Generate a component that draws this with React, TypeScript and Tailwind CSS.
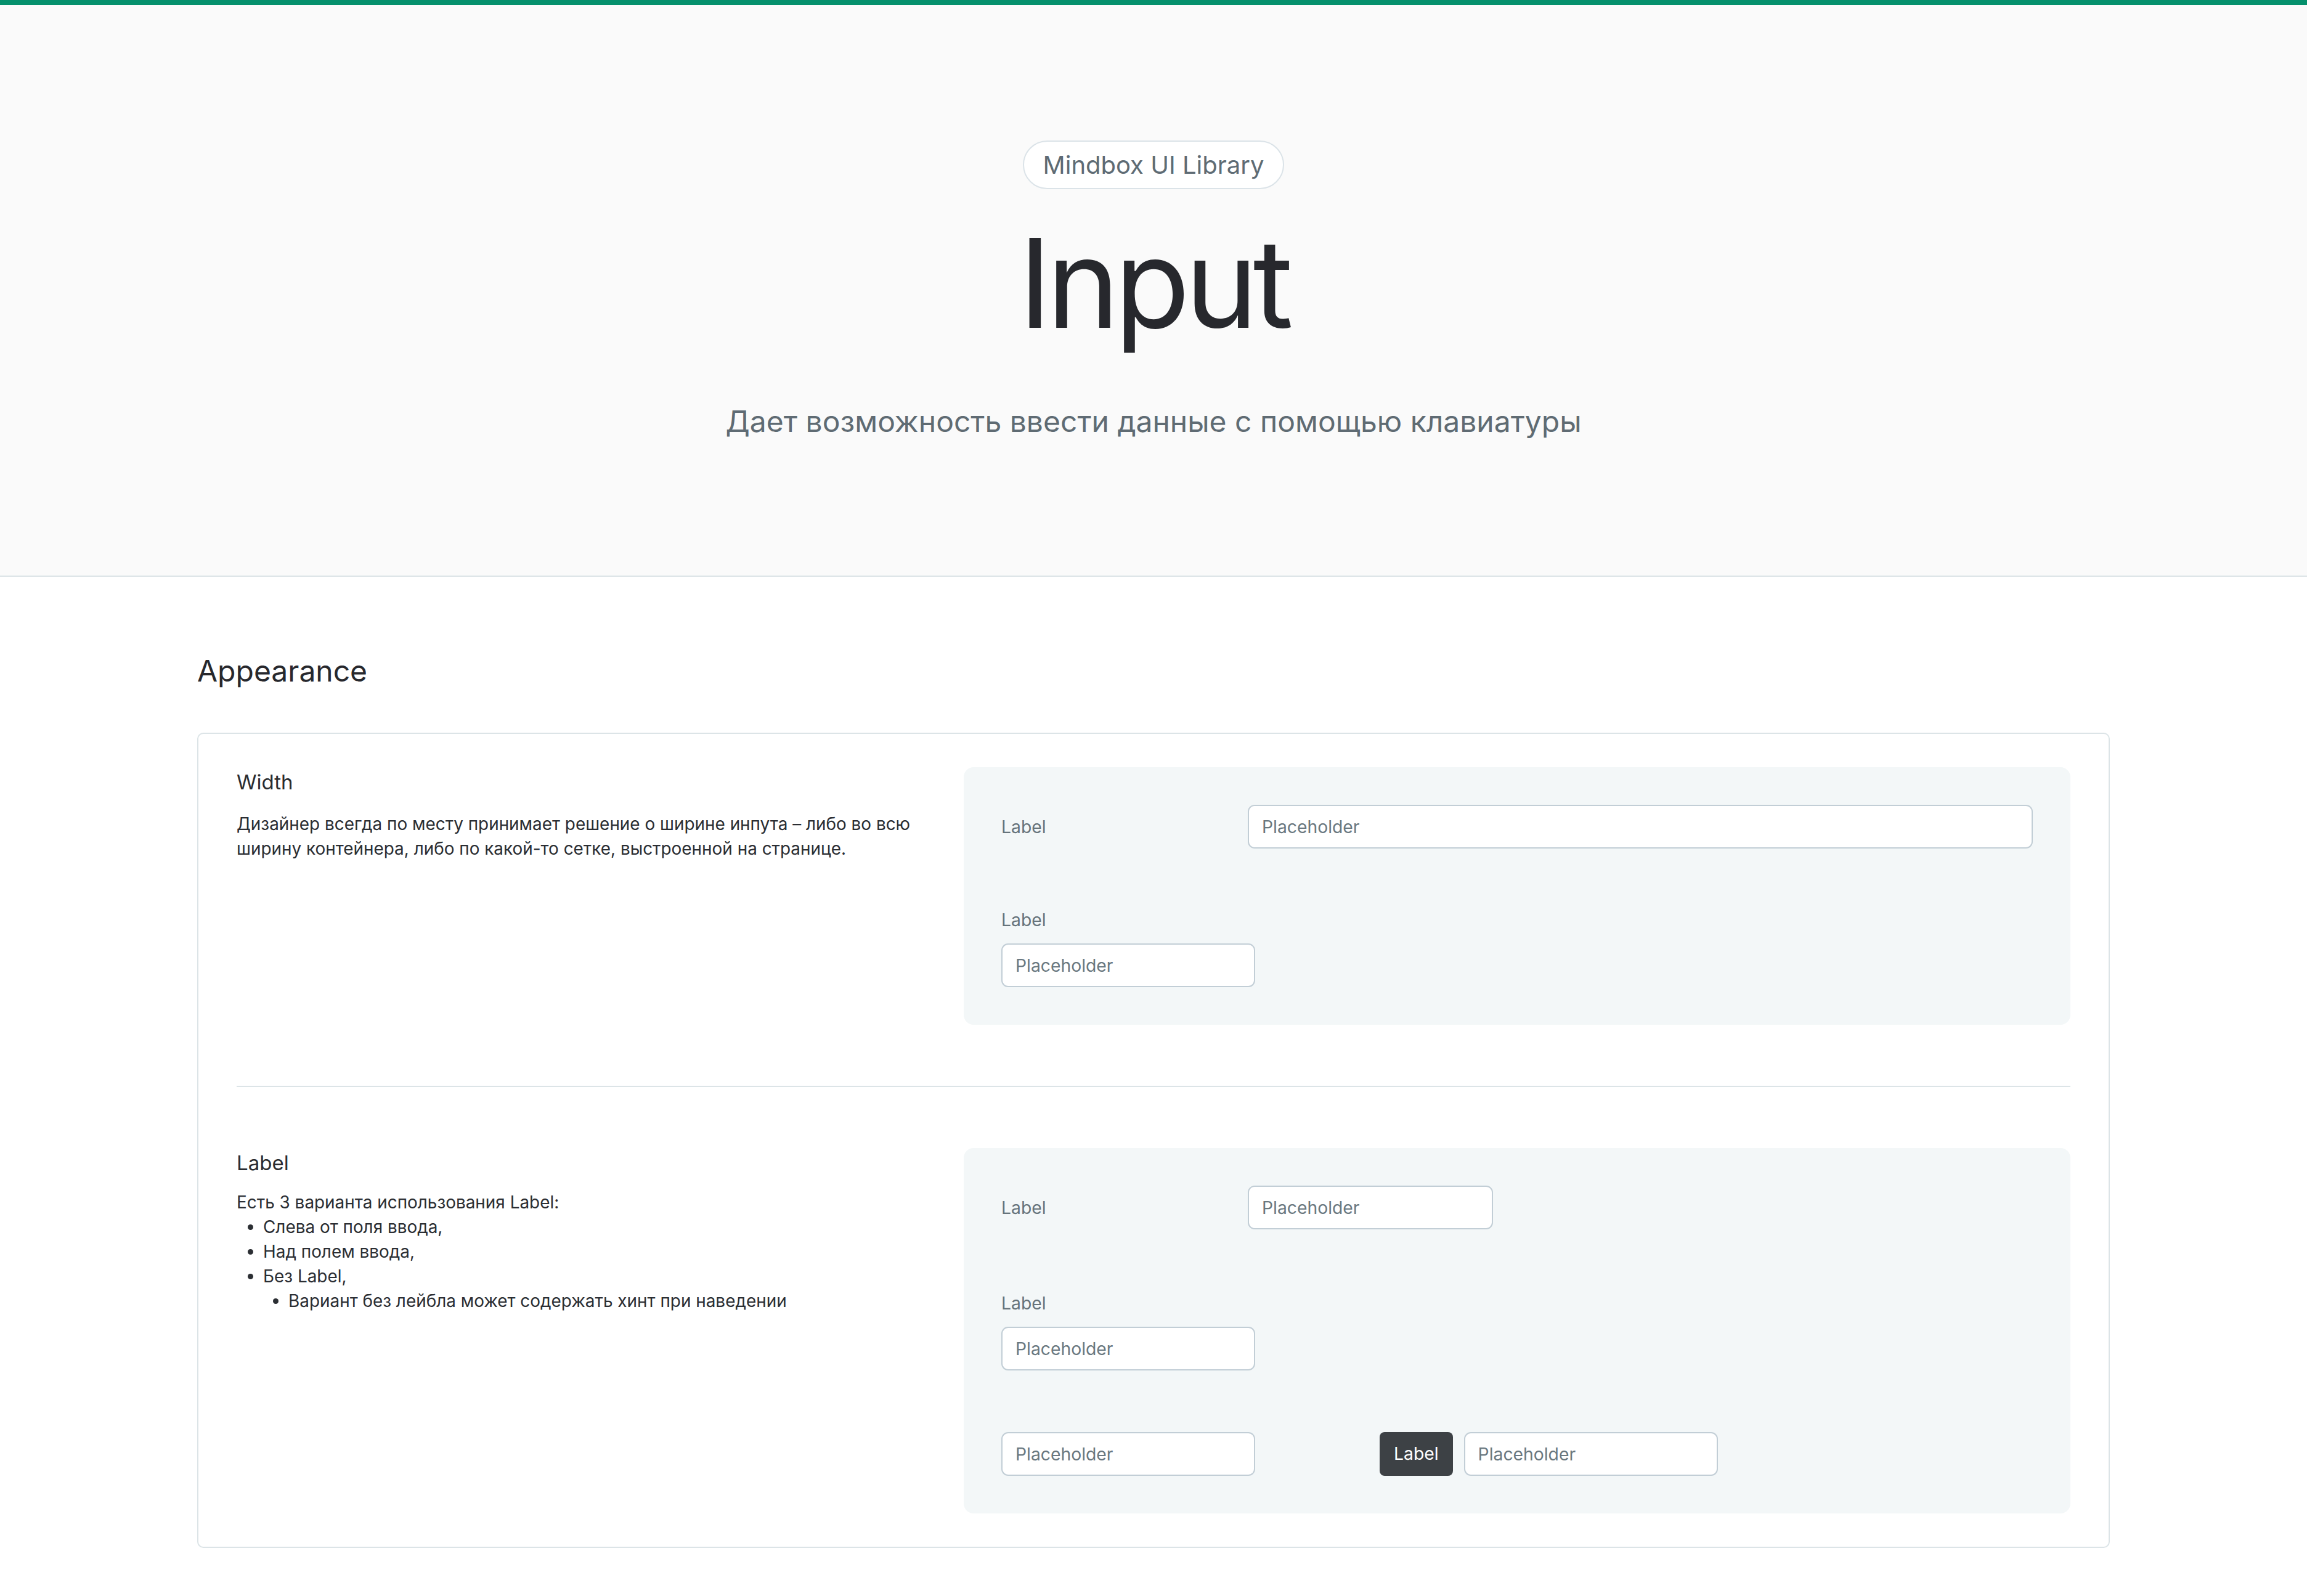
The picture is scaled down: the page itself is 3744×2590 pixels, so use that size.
import React from "react";

export default function App() {
  return (
    <div className="min-h-screen bg-white font-[Inter,sans-serif] text-[#2b2e33]">
      <header className="flex flex-col items-center border-t-[8px] border-b-2 border-t-[#05906c] border-b-[#dce4e7] bg-[#fafafa] pt-[220px] pb-[214px]">
        <div className="flex h-[79px] items-center rounded-full border-2 border-[#dbe3e8] bg-white px-[31px] text-[40px] text-[#5e6b74]">
          Mindbox UI Library
        </div>
        <h1 className="mt-[52px] text-[200px] leading-none tracking-[-0.04em] text-[#27282d]">Input</h1>
        <p className="mt-[89px] text-[48px] leading-[72px] text-[#5f6b73]">
          Дает возможность ввести данные с помощью клавиатуры
        </p>
      </header>

      <main className="px-[320px] pt-[124px] pb-[80px]">
        <h2 className="text-[48px] leading-[58px] text-[#27282d]">Appearance</h2>

        <div className="mt-[71px] rounded-[10px] border-2 border-[#dce4e7] px-[62px] py-[54px]">
          <Section
            title="Width"
            text={
              <p className="mt-[24px] text-[27.9px] leading-[40px]">
                Дизайнер всегда по месту принимает решение о ширине инпута – либо во всю ширину контейнера, либо по какой-то сетке, выстроенной на странице.
              </p>
            }
          >
            <div className="flex items-center">
              <FieldLabel className="w-[400px]">Label</FieldLabel>
              <Field className="flex-1" />
            </div>
            <div className="mt-[96px] flex flex-col gap-[18px]">
              <FieldLabel>Label</FieldLabel>
              <Field className="w-[412px]" />
            </div>
          </Section>

          <div className="my-[99px] h-[2px] bg-[#dce4e7]" />

          <Section
            title="Label"
            text={
              <div className="mt-[20px] text-[27.9px] leading-[40px]">
                <p>Есть 3 варианта использования Label:</p>
                <ul className="list-disc pl-[43px]">
                  <li>Слева от поля ввода,</li>
                  <li>Над полем ввода,</li>
                  <li>
                    Без Label,
                    <ul className="list-disc pl-[41px]">
                      <li>Вариант без лейбла может содержать хинт при наведении</li>
                    </ul>
                  </li>
                </ul>
              </div>
            }
          >
            <div className="flex items-center">
              <FieldLabel className="w-[400px]">Label</FieldLabel>
              <Field className="w-[398px]" />
            </div>
            <div className="mt-[100px] flex flex-col gap-[18px]">
              <FieldLabel>Label</FieldLabel>
              <Field className="w-[412px]" />
            </div>
            <div className="mt-[100px] flex items-center">
              <Field className="w-[412px]" />
              <span className="ml-[202px] flex h-[71px] items-center rounded-[8px] bg-[#3d4145] px-[23px] text-[28.3px] text-white">
                Label
              </span>
              <Field className="ml-[18px] w-[412px]" />
            </div>
          </Section>
        </div>
      </main>
    </div>
  );
}

function Section({ title, text, children }: { title: string; text: React.ReactNode; children: React.ReactNode }) {
  return (
    <section className="flex gap-[56px]">
      <div className="w-[1124px] shrink-0">
        <h3 className="text-[33px] leading-[48px] text-[#2a2c30]">{title}</h3>
        {text}
      </div>
      <div className="flex-1 rounded-[16px] bg-[#f3f7f8] p-[61px]">{children}</div>
    </section>
  );
}

function FieldLabel({ children, className = "" }: { children: React.ReactNode; className?: string }) {
  return <div className={`text-[28.3px] leading-[40px] text-[#66737b] ${className}`}>{children}</div>;
}

function Field({ className = "" }: { className?: string }) {
  return (
    <input
      placeholder="Placeholder"
      className={`h-[71px] rounded-[11px] border-2 border-[#c2ced6] bg-white px-[21px] text-[28.3px] text-[#2b2e33] outline-none placeholder:text-[#6a7880] ${className}`}
    />
  );
}
